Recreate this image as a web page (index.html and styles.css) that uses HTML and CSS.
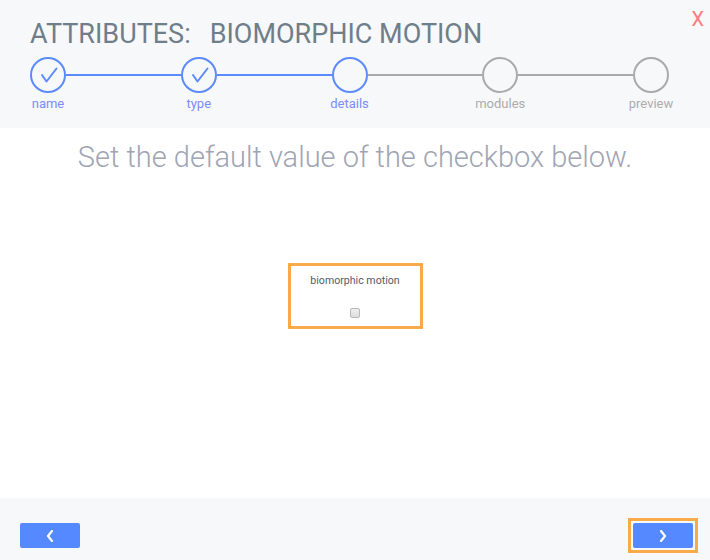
FILE: index.html
```html
<!DOCTYPE html>
<html lang="en">
<head>
  <meta charset="UTF-8" />
  <meta name="viewport" content="width=device-width, initial-scale=1.0"/>
  <title>Attributes: Biomorphic Motion</title>
  <link rel="stylesheet" href="styles.css">
</head>
<body>
  <div class="wizard">
    <div class="header">
      <h1 class="title"><span>ATTRIBUTES:</span><span class="name">BIOMORPHIC MOTION</span></h1>
      <button class="close">X</button>

      <div class="stepper">
        <div class="step done">
          <div class="circle">
            <svg width="36" height="36" viewBox="0 0 36 36"><polyline points="12,18 16.5,24.5 26.5,11.5" fill="none" stroke="#5b8bff" stroke-width="2" stroke-linecap="round" stroke-linejoin="round"/></svg>
          </div>
          <span class="label">name</span>
        </div>
        <div class="bar on"></div>
        <div class="step done">
          <div class="circle">
            <svg width="36" height="36" viewBox="0 0 36 36"><polyline points="12,18 16.5,24.5 26.5,11.5" fill="none" stroke="#5b8bff" stroke-width="2" stroke-linecap="round" stroke-linejoin="round"/></svg>
          </div>
          <span class="label">type</span>
        </div>
        <div class="bar on"></div>
        <div class="step current">
          <div class="circle"></div>
          <span class="label">details</span>
        </div>
        <div class="bar"></div>
        <div class="step">
          <div class="circle"></div>
          <span class="label">modules</span>
        </div>
        <div class="bar"></div>
        <div class="step">
          <div class="circle"></div>
          <span class="label">preview</span>
        </div>
      </div>
    </div>

    <div class="content">
      <p class="prompt">Set the default value of the checkbox below.</p>
      <div class="field">
        <div class="field-name">biomorphic motion</div>
        <span class="check"></span>
      </div>
    </div>

    <div class="footer">
      <button class="nav back">
        <svg width="8" height="12" viewBox="0 0 8 12"><polyline points="6,1 2,6 6,11" fill="none" stroke="#fff" stroke-width="2.2" stroke-linecap="round" stroke-linejoin="round"/></svg>
      </button>
      <span class="focus-ring">
        <button class="nav next">
          <svg width="8" height="12" viewBox="0 0 8 12"><polyline points="2,1 6,6 2,11" fill="none" stroke="#fff" stroke-width="2.2" stroke-linecap="round" stroke-linejoin="round"/></svg>
        </button>
      </span>
    </div>
  </div>
</body>
</html>
```

FILE: styles.css
```css
body {
  margin: 0;
  font-family: Roboto, "Liberation Sans", sans-serif;
  background: #ffffff;
}
.wizard {
  width: 710px;
  height: 560px;
  display: flex;
  flex-direction: column;
}
.header {
  position: relative;
  height: 128px;
  box-sizing: border-box;
  padding: 18px 41px 0 30px;
  background: #f7f8fa;
}
.title {
  margin: 0;
  font-size: 27px;
  line-height: 32px;
  font-weight: 400;
  color: #6f7e8b;
  white-space: nowrap;
}
.title .name {
  margin-left: 19px;
}
.close {
  position: absolute;
  top: 5px;
  right: 6px;
  border: none;
  background: none;
  padding: 0;
  font-family: Roboto, sans-serif;
  font-size: 20px;
  line-height: 28px;
  color: #ff7b7b;
  cursor: pointer;
}
.stepper {
  display: flex;
  margin-top: 7px;
}
.step {
  width: 36px;
  display: flex;
  flex-direction: column;
  align-items: center;
}
.circle {
  width: 36px;
  height: 36px;
  box-sizing: border-box;
  border: 2px solid #aaaaaa;
  border-radius: 50%;
  display: flex;
  align-items: center;
  justify-content: center;
}
.circle svg {
  flex: none;
}
.step.done .circle, .step.current .circle {
  border-color: #5b8bff;
}
.label {
  margin-top: 3px;
  font-size: 13px;
  line-height: 16px;
  white-space: nowrap;
  color: #acacac;
}
.step.done .label, .step.current .label {
  color: #7b8cff;
}
.bar {
  flex: 1;
  height: 2px;
  margin-top: 17px;
  background: #aaaaaa;
}
.bar.on {
  background: #5b8bff;
}
.content {
  flex: 1;
  padding-top: 12px;
}
.prompt {
  margin: 0;
  text-align: center;
  font-size: 29px;
  line-height: 34px;
  font-weight: 300;
  color: #a0a4b3;
}
.field {
  width: 135px;
  height: 66px;
  box-sizing: border-box;
  margin: 89px auto 0;
  border: 3px solid #f9aa4a;
  padding-top: 8px;
  display: flex;
  flex-direction: column;
  align-items: center;
}
.field-name {
  font-size: 10.6px;
  line-height: 13px;
  color: #555a66;
}
.check {
  margin-top: 21px;
  width: 10px;
  height: 10px;
  box-sizing: border-box;
  border: 1px solid #b9b9b9;
  border-radius: 2px;
  background: linear-gradient(#eeeeee, #dddddd);
}
.footer {
  height: 62px;
  box-sizing: border-box;
  padding: 20px 12px 0 20px;
  background: #f7f8fa;
  display: flex;
  justify-content: space-between;
  align-items: flex-start;
}
.nav {
  width: 60px;
  height: 25px;
  border: none;
  border-radius: 2px;
  background: #5589ff;
  padding: 0;
  display: flex;
  align-items: center;
  justify-content: center;
  cursor: pointer;
}
.nav.back {
  margin-top: 5px;
}
.nav.next {
  width: 60px;
}
.focus-ring {
  display: flex;
  padding: 2px;
  border: 3px solid #f9aa4a;
}
```
